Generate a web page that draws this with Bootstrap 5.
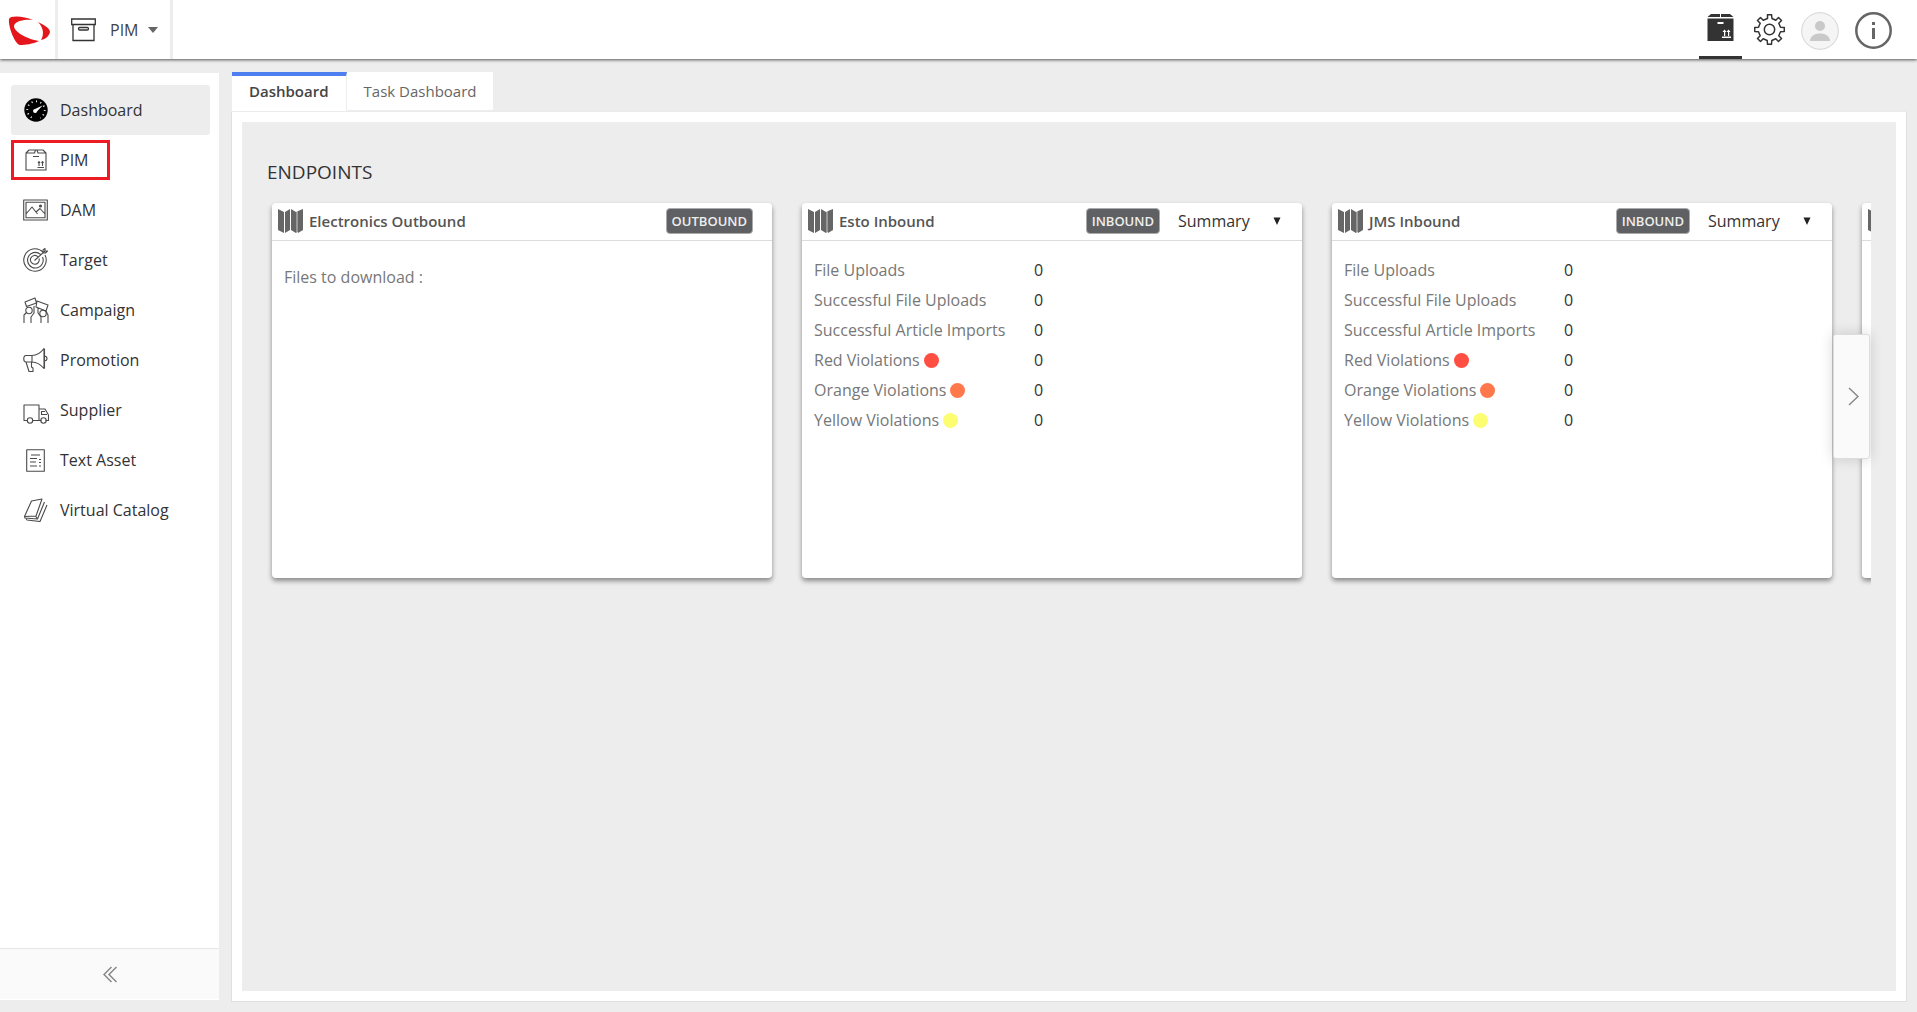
<!DOCTYPE html>
<html lang="en">
<head>
<meta charset="utf-8">
<meta name="viewport" content="width=device-width, initial-scale=1">
<title>Dashboard</title>
<link href="https://cdn.jsdelivr.net/npm/bootstrap@5.3.0/dist/css/bootstrap.min.css" rel="stylesheet">
<style>
body{font-family:"Open Sans","Noto Sans",sans-serif;font-size:16px;line-height:24px;color:#333;background:#ededed}
a{color:inherit;text-decoration:none}
svg{flex:none;display:block}
.ln{fill:none;stroke:#4a4a4a;stroke-width:1.1;stroke-linejoin:round}
.topbar{height:59px;background:#fff;box-shadow:0 1px 3px rgba(0,0,0,.65);z-index:5}
.logo-cell{width:58px;border-right:3px solid #ededed;padding-left:8px}
.app-switch{width:115px;border:0;border-right:3px solid #ededed;background:#fff;padding:0 12px 0 13px;color:#444}
.app-switch svg + span{margin:0 10px 0 14px}
.tools{padding-right:25px}
.tool-btn{border:0;background:none;padding:0;height:59px}
.tool-on{width:43px;border-bottom:3px solid #333;padding-top:6px}
.tool-round{padding-top:2px}
.side{width:219px;background:#fff;margin:14px 0 12px}
.side-nav{padding:12px 9px 0 11px}
.side-nav a{height:50px;padding-left:11px;gap:11px;border-radius:3px}
.side-nav a.on{background:#ededed}
.side-nav .pic{width:27px;display:flex;justify-content:center}
.marked{position:absolute;left:0;top:5px;width:99px;height:40px;border:3px solid #ed1c24}
.side-foot{height:52px;background:#fafafa;border:0;border-top:1px solid #e6e6e6;border-bottom:1px solid #fff}
.work{padding:13px 10px 10px 12px}
.tabs{padding-left:1px}
.tabs a{height:39px;background:#fff;font-size:15px;padding:0 17px;color:#666}
.tabs a.on{border-top:4px solid #4d7ff0;border-right:1px solid #ededed;font-weight:600;color:#444;padding-bottom:5px}
.tabs a + a{height:38px}
.panel{background:#fff;border:1px solid #dfdfdf;border-top-color:#ebebeb;padding:10px}
.canvas{background:#ededed;padding:34px 25px 0}
.canvas h1{font-size:19px;line-height:32px;margin:0 0 10px;color:#333;font-weight:400}
.strip{gap:30px;padding:5px 0 12px 5px;overflow:hidden}
.endpoint{flex:0 0 500px;height:375px;background:#fff;border-radius:4px;box-shadow:0 3px 5px rgba(0,0,0,.42)}
.endpoint header{height:38px;border-bottom:1px solid #dcdcdc;padding:0 19px 1px 6px}
.endpoint h2{font-size:15px;line-height:24px;font-weight:600;color:#555;margin:0 0 0 6px}
.tag{background:#5f6063;color:#eee;border:1px solid #aaa;border-radius:4px;font-size:13px;line-height:24px;font-weight:600;padding:0 5px}
.view{margin-left:15px}
.view select{appearance:none;border:0;background:none;color:#333;width:112px;padding:0 0 0 3px;line-height:24px}
.view svg{margin-left:-14px;margin-right:2px;pointer-events:none}
.stats{margin:14px 0 0 12px}
.stats td,.stats th{padding:0;height:30px;font-weight:400}
.stats th{width:220px;color:#777}
.spot{display:inline-block;width:15px;height:15px;border-radius:50%;margin-left:4px;vertical-align:-2px}
.files{margin:24px 0 0 12px;color:#777}
.next-btn{position:absolute;right:1px;top:136px;width:37px;height:125px;background:#fafafa;border:1px solid #ddd;border-radius:3px;box-shadow:0 0 14px rgba(0,0,0,.16);padding:0 0 0 3px}
</style>
</head>
<body class="vh-100 d-flex flex-column overflow-hidden">
<svg width="0" height="0" class="position-absolute" aria-hidden="true">
 <symbol id="map" viewBox="0 0 25 24"><path fill="#666" d="M0 0l6 3v21l-6-3zM7 3l5-3v21l-5 3zM13 0l5 3v21l-5-3z"/><path fill="#999" d="M18 3l2-1v21l-2 1z"/><path fill="#666" d="M20 2l5-2v21l-5 3z"/></symbol>
 <symbol id="tri" viewBox="0 0 8 8"><path fill="#222" d="M.5 .5h7L4 8z"/></symbol>
</svg>

<header class="topbar d-flex position-relative flex-shrink-0">
 <a class="logo-cell d-flex align-items-center" href="#" aria-label="Home">
  <svg width="43" height="30" viewBox="0 0 43 30"><path fill="#e4151b" d="M1 4C2 0 16 1 25 5C16 4 7 6 6 11C6 17 19 24 31 26C25 29 17 30 12 30C7 29 0 12 1 4zM30 7C37 10 42 14 42 17C41 21 38 24 33 25C36 20 36 13 30 7z"/></svg>
 </a>
 <button class="app-switch d-flex align-items-center" type="button">
  <svg width="25" height="24" viewBox="0 0 25 24" fill="none" stroke="#333" stroke-width="1.300"><path d="M.7 1h23.600v5.500H.7zM2 6.500v16h21v-16"/><rect x="7.500" y="9.500" width="10" height="2.500" rx="1.200"/></svg>
  <span>PIM</span>
  <svg width="10" height="6" viewBox="0 0 10 6"><path fill="#666" d="M0 0h10L5 6z"/></svg>
 </button>
 <div class="tools d-flex ms-auto align-items-center">
  <button class="tool-btn tool-on d-flex justify-content-center align-items-center" type="button" aria-label="Packages">
   <svg class="mb-2" width="27" height="28" viewBox="0 0 27 28"><path fill="#333" d="M4 1h9v3H0.500zM14 1h9l3.500 3H14zM.5 5.500h26V28H.5z"/><path fill="#fff" d="M10.500 9h6v2h-6zM15 23.500h9V25h-9zM17 23v-4h-1.500l2-2.500 2 2.500H18.200v4zM21 23v-4h-1.500l2-2.500 2 2.500H22.200v4z"/></svg>
  </button>
  <button class="tool-btn ms-2" type="button" aria-label="Settings">
   <svg class="ms-1" width="31" height="31" viewBox="-15.500 -15.500 31 31" fill="none" stroke="#333" stroke-width="1.500" stroke-linejoin="round"><circle r="5.200"/><path d="M-2 -11L-2 -14.800H2L2.500 -11L6.300 -9.300L9 -12L12 -9L9.300 -6.300L11 -2.300L14.800 -2V2L11 2.300L9.300 6.300L12 9L9 12L6.300 9.300L2.300 11L2 14.800H-2L-2.300 11L-6.300 9.300L-9 12L-12 9L-9.300 6.300L-11 2.300L-14.800 2V-2L-11 -2.300L-9.300 -6.300L-12 -9L-9 -12L-6.300 -9.300Z"/></svg>
  </button>
  <button class="tool-btn tool-round ms-3" type="button" aria-label="Profile">
   <svg width="38" height="38" viewBox="0 0 38 38"><circle cx="19" cy="19" r="18.300" fill="#f5f5f5" stroke="#d4d4d4"/><circle cx="19" cy="14" r="5" fill="#c9c9c9"/><path fill="#c9c9c9" d="M9 29c0-5 5-7.500 10-7.500s10 2.500 10 7.500z"/></svg>
  </button>
  <button class="tool-btn tool-round ms-3" type="button" aria-label="Information">
   <svg width="37" height="37" viewBox="0 0 37 37"><circle cx="18.500" cy="18.500" r="17.200" fill="none" stroke="#666" stroke-width="2.500"/><path fill="#666" d="M17 10h3v3h-3zM17 16h3v11h-3z"/></svg>
  </button>
 </div>
</header>

<div class="d-flex flex-grow-1 overflow-hidden">
 <aside class="side d-flex flex-column flex-shrink-0" id="side">
  <nav class="side-nav flex-grow-1">
   <a class="on d-flex align-items-center" href="#"><span class="pic"><svg width="24" height="24" viewBox="0 0 24 24"><circle cx="12" cy="12" r="11.700"/><circle cx="12" cy="12" r="8.700" fill="none" stroke="#fff" stroke-width="1.800" stroke-dasharray="1 3.550" pathLength="54.600"/><path fill="#fff" d="M18.500 7.500l-5.500 6a2 2 0 1 1-2-2.500z"/><path d="M8 18.500h8V22H8z"/></svg></span>Dashboard</a>
   <a class="d-flex align-items-center position-relative" href="#"><span class="marked"></span><span class="pic"><svg class="ln" width="22" height="22" viewBox="0 0 22 22"><path d="M1 4l3-3h14l3 3v17H1zM1 4h8.500l1-3h1.500l1 3h8M8 7.500h6M12.500 18.500h6.500M14 17v-4M17.500 17v-4M13 14l1-1.500 1 1.500M16.500 14l1-1.500 1 1.500"/></svg></span>PIM</a>
   <a class="d-flex align-items-center" href="#"><span class="pic"><svg class="ln" width="25" height="22" viewBox="0 0 25 22"><path d="M.7 1h23.600v20H.7zM3 3.200h19v15.600H3zM3 15l6-7 5.500 7M13 13l4-3.500 5 5.500"/><circle cx="17.500" cy="7" r="1" fill="#4a4a4a"/></svg></span>DAM</a>
   <a class="d-flex align-items-center" href="#"><span class="pic"><svg class="ln" width="25" height="24" viewBox="0 0 25 24"><path d="M20 4.200A11.200 11.200 0 1 0 22 7M17.500 6.300A7.800 7.800 0 1 0 19.500 9M15 8.800A4.400 4.400 0 1 0 16 10.500M11.500 12.500L22 3M20 5V2l2-1.500V3h2.500l-2 2z"/></svg></span>Target</a>
   <a class="d-flex align-items-center" href="#"><span class="pic"><svg class="ln" width="26" height="26" viewBox="0 0 26 26"><path d="M2 5l10-4 1.500 5L3.500 9.500zM14 4l11 4-2 6-10-4zM1 26v-8l3-3M8 26v-6l3-4V9M25 26v-8l-2-4M18 26v-6l-3-4v-5"/><circle cx="6" cy="13.500" r="3.200"/><circle cx="20" cy="16.500" r="3.200"/></svg></span>Campaign</a>
   <a class="d-flex align-items-center" href="#"><span class="pic"><svg class="ln" width="25" height="25" viewBox="0 0 25 25"><path d="M9 7.500h-6c-3 0-3 6.500 0 6.500h6zM9 7.500c5 0 9-3 12-7v20c-3-3.500-7-6.500-12-6.500M21 8c4 0 4 5 0 5M3 14l3 9.500h4V20l-1.500-1V14M21.500 1v19.500"/></svg></span>Promotion</a>
   <a class="d-flex align-items-center" href="#"><span class="pic mt-2"><svg class="ln" width="26" height="20" viewBox="0 0 26 20"><path d="M4 16.500H1V1h15v15.500h-6M16 5h6l3.500 6v5.500h-3M18.500 16.500H16M24 10.500h-5.500v-3H22"/><circle cx="7" cy="16.500" r="2.700"/><circle cx="20.500" cy="16.500" r="2.700"/></svg></span>Supplier</a>
   <a class="d-flex align-items-center" href="#"><span class="pic"><svg class="ln" width="19" height="23" viewBox="0 0 19 23"><path d="M.7.700h17.600v21.600H.7zM5 6h9M4 9.500h7M4 13h6M4 17h7M13 10.500h2M13 13.500h2M13 17h2"/></svg></span>Text Asset</a>
   <a class="d-flex align-items-center" href="#"><span class="pic"><svg class="ln" width="25" height="24" viewBox="0 0 25 24"><path d="M8.500 3L19 1l-6 17L1.500 18.500zM1.500 18.500L2 20l12.500 1L21.500 4M3 20.500l1 1.500 13 1.500L24 7M12.500 18l2 3"/></svg></span>Virtual Catalog</a>
  </nav>
  <button class="side-foot d-flex align-items-center justify-content-center" type="button" aria-label="Collapse menu">
   <svg width="14" height="17" viewBox="0 0 14 17" fill="none" stroke="#888" stroke-width="1.500"><path d="M8.500 1L1 8.500 8.500 16M13.500 1L6 8.500l7.500 7.500"/></svg>
  </button>
 </aside>

 <main class="work d-flex flex-column flex-grow-1 overflow-hidden">
  <nav class="tabs d-flex">
   <a class="on d-flex align-items-center" href="#">Dashboard</a>
   <a class="d-flex align-items-center" href="#">Task Dashboard</a>
  </nav>
  <div class="panel d-flex flex-column flex-grow-1">
   <section class="canvas flex-grow-1">
    <h1>ENDPOINTS</h1>
    <div class="position-relative">
     <div class="strip d-flex">
      <article class="endpoint">
       <header class="d-flex align-items-center"><svg width="25" height="24"><use href="#map"/></svg><h2>Electronics Outbound</h2><span class="tag ms-auto">OUTBOUND</span></header>
       <p class="files">Files to download :</p>
      </article>
      <article class="endpoint">
       <header class="d-flex align-items-center"><svg width="25" height="24"><use href="#map"/></svg><h2>Esto Inbound</h2><span class="tag ms-auto">INBOUND</span>
        <label class="view d-flex align-items-center"><select aria-label="Esto Inbound view"><option>Summary</option></select><svg width="8" height="8"><use href="#tri"/></svg></label></header>
       <table class="stats"><tbody>
        <tr><th scope="row">File Uploads</th><td>0</td></tr>
        <tr><th scope="row">Successful File Uploads</th><td>0</td></tr>
        <tr><th scope="row">Successful Article Imports</th><td>0</td></tr>
        <tr><th scope="row">Red Violations<span class="spot" style="background:#ff4e42"></span></th><td>0</td></tr>
        <tr><th scope="row">Orange Violations<span class="spot" style="background:#ff784b"></span></th><td>0</td></tr>
        <tr><th scope="row">Yellow Violations<span class="spot" style="background:#fdfd72"></span></th><td>0</td></tr>
       </tbody></table>
      </article>
      <article class="endpoint">
       <header class="d-flex align-items-center"><svg width="25" height="24"><use href="#map"/></svg><h2>JMS Inbound</h2><span class="tag ms-auto">INBOUND</span>
        <label class="view d-flex align-items-center"><select aria-label="JMS Inbound view"><option>Summary</option></select><svg width="8" height="8"><use href="#tri"/></svg></label></header>
       <table class="stats"><tbody>
        <tr><th scope="row">File Uploads</th><td>0</td></tr>
        <tr><th scope="row">Successful File Uploads</th><td>0</td></tr>
        <tr><th scope="row">Successful Article Imports</th><td>0</td></tr>
        <tr><th scope="row">Red Violations<span class="spot" style="background:#ff4e42"></span></th><td>0</td></tr>
        <tr><th scope="row">Orange Violations<span class="spot" style="background:#ff784b"></span></th><td>0</td></tr>
        <tr><th scope="row">Yellow Violations<span class="spot" style="background:#fdfd72"></span></th><td>0</td></tr>
       </tbody></table>
      </article>
      <article class="endpoint">
       <header class="d-flex align-items-center"><svg width="25" height="24"><use href="#map"/></svg></header>
      </article>
     </div>
     <button class="next-btn d-flex align-items-center justify-content-center" type="button" aria-label="Next endpoints"><svg width="11" height="19" viewBox="0 0 11 19" fill="none" stroke="#888" stroke-width="1.500"><path d="M1 1l9 8.500L1 18"/></svg></button>
    </div>
   </section>
  </div>
 </main>
</div>
<script src="https://cdn.jsdelivr.net/npm/bootstrap@5.3.0/dist/js/bootstrap.bundle.min.js"></script>
</body>
</html>
